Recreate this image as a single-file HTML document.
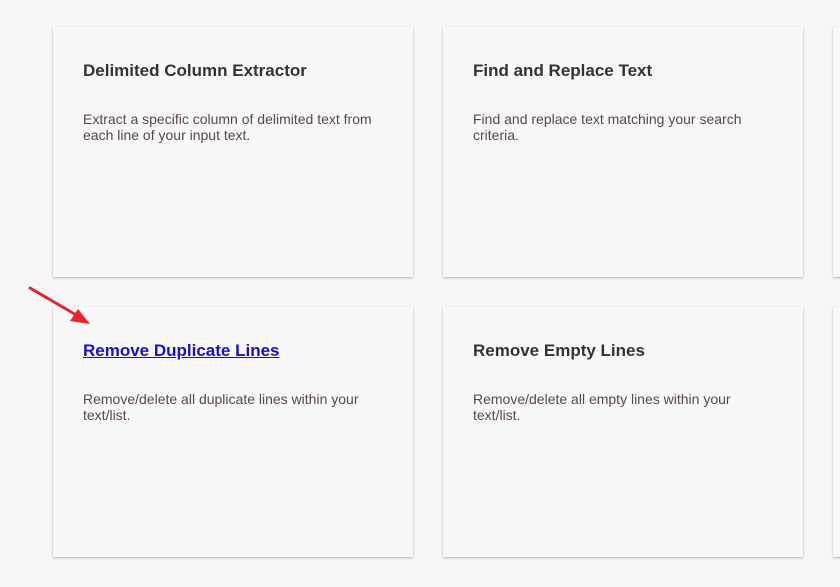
<!DOCTYPE html>
<html><head><style>
body{margin:0;background:#f6f6f6;width:840px;height:587px;overflow:hidden;position:relative;font-family:"Liberation Sans",Arial,sans-serif}
.c{position:absolute;width:360px;height:250px;background:#f8f8f8;box-shadow:0 1px 2px rgba(0,0,0,.25),0 0 1px rgba(0,0,0,.08);box-sizing:border-box;padding:34px 30px}
.c h3{margin:0;font-size:17px;font-weight:bold;color:#333;line-height:20px}
.c h3 a{color:#1a0dcc;text-decoration:underline}
.c p{margin:30px 0 0;font-size:14px;line-height:16px;color:#5b4646}
</style></head><body>
<div class="c" style="left:53px;top:27px"><h3>Delimited Column Extractor</h3><p>Extract a specific column of delimited text from each line of your input text.</p></div>
<div class="c" style="left:443px;top:27px"><h3>Find and Replace Text</h3><p>Find and replace text matching your search criteria.</p></div>
<div class="c" style="left:833px;top:27px"></div>
<div class="c" style="left:53px;top:307px"><h3><a>Remove Duplicate Lines</a></h3><p>Remove/delete all duplicate lines within your text/list.</p></div>
<div class="c" style="left:443px;top:307px"><h3>Remove Empty Lines</h3><p>Remove/delete all empty lines within your text/list.</p></div>
<div class="c" style="left:833px;top:307px"></div>
<svg style="position:absolute;left:0;top:0" width="120" height="340"><line x1="30" y1="288" x2="78" y2="316" stroke="#e8232a" stroke-width="3" stroke-linecap="round"/><polygon points="90,324 70,321 78,309" fill="#e8232a"/></svg>
</body></html>
